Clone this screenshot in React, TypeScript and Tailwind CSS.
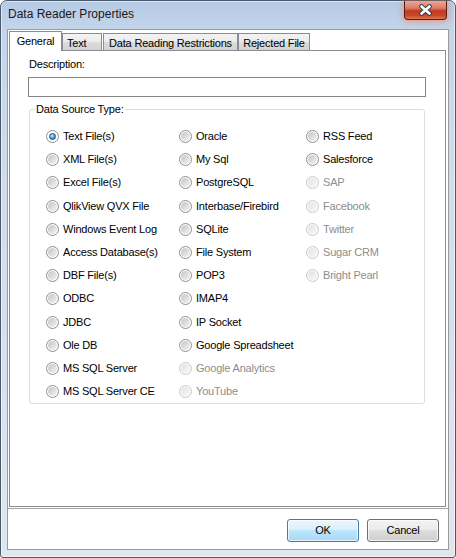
import React from "react";

type Choice = { label: string; on?: boolean; off?: boolean };

const columns: Choice[][] = [
  [
    { label: "Text File(s)", on: true },
    { label: "XML File(s)" },
    { label: "Excel File(s)" },
    { label: "QlikView QVX File" },
    { label: "Windows Event Log" },
    { label: "Access Database(s)" },
    { label: "DBF File(s)" },
    { label: "ODBC" },
    { label: "JDBC" },
    { label: "Ole DB" },
    { label: "MS SQL Server" },
    { label: "MS SQL Server CE" },
  ],
  [
    { label: "Oracle" },
    { label: "My Sql" },
    { label: "PostgreSQL" },
    { label: "Interbase/Firebird" },
    { label: "SQLite" },
    { label: "File System" },
    { label: "POP3" },
    { label: "IMAP4" },
    { label: "IP Socket" },
    { label: "Google Spreadsheet" },
    { label: "Google Analytics", off: true },
    { label: "YouTube", off: true },
  ],
  [
    { label: "RSS Feed" },
    { label: "Salesforce" },
    { label: "SAP", off: true },
    { label: "Facebook", off: true },
    { label: "Twitter", off: true },
    { label: "Sugar CRM", off: true },
    { label: "Bright Pearl", off: true },
  ],
];

const colWidths = ["w-[133px]", "w-[127px]", "w-[110px]"];

function Radio({ on, off }: { on?: boolean; off?: boolean }) {
  if (off) {
    return (
      <span className="flex h-[13px] w-[13px] shrink-0 items-center justify-center rounded-full border border-[#c9c9c9] bg-[#fbfbfb]">
        <span className="h-[9px] w-[9px] rounded-full bg-[linear-gradient(135deg,#e2e2e2,#f8f8f8)]" />
      </span>
    );
  }
  return (
    <span className="flex h-[13px] w-[13px] shrink-0 items-center justify-center rounded-full border border-[#8e8f8f] bg-[#fdfdfd]">
      {on ? (
        <span className="h-[7px] w-[7px] rounded-full border border-[#1d4f7c] bg-[radial-gradient(circle_at_40%_35%,#c4f0ff_0%,#4ea6e4_50%,#1d5f98_100%)]" />
      ) : (
        <span className="h-[9px] w-[9px] rounded-full bg-[linear-gradient(135deg,#c4c4c4,#f4f4f4)]" />
      )}
    </span>
  );
}

function CloseButton() {
  return (
    <div className="mr-[8px] flex h-[19px] w-[43px] shrink-0 items-center justify-center rounded-b-[4px] border border-t-0 border-[#5a1e12] bg-[linear-gradient(180deg,#eaa898_0%,#dd7b63_40%,#c23a1e_55%,#c8482a_80%,#e0774f_100%)] shadow-[0_1px_6px_1px_rgba(255,110,60,0.55)]">
      <svg width="15" height="12" viewBox="0 0 15 12">
        <path d="M3.5 2.5 L11.5 9.5 M11.5 2.5 L3.5 9.5" stroke="#3b3f48" strokeWidth="4.6" strokeLinecap="round" />
        <path d="M3.5 2.5 L11.5 9.5 M11.5 2.5 L3.5 9.5" stroke="#ffffff" strokeWidth="2.6" strokeLinecap="round" />
      </svg>
    </div>
  );
}

function Tab({ label, width, selected, left }: { label: string; width: string; selected?: boolean; left?: boolean }) {
  if (selected) {
    return (
      <div className={`relative z-10 mb-[-1px] flex h-[20px] ${width} justify-center border border-b-0 border-[#898c95] bg-white pt-[3px] leading-[13px]`}>
        {label}
      </div>
    );
  }
  return (
    <div
      className={`flex h-[17px] ${width} ${left ? "justify-start pl-[4px]" : "justify-center"} border border-b-0 border-[#898c95] bg-[linear-gradient(180deg,#f3f3f3_0%,#ebebeb_50%,#dddddd_50%,#d2d2d2_100%)] pt-[3px] leading-[13px]`}
    >
      {label}
    </div>
  );
}

export default function App() {
  return (
    <div className="h-[558px] w-[456px] bg-white text-[11px] tracking-[-0.2px] text-black [font-family:'Liberation_Sans',Arial,sans-serif]">
      <div className="flex h-full w-full flex-col rounded-t-[7px] rounded-b-[3px] border border-[#4a5a6d] bg-[linear-gradient(180deg,#b4c9e4_0%,#c4d5ea_5%,#d1ddec_35%,#dfe6ef_100%)] shadow-[inset_0_0_0_1px_rgba(255,255,255,0.55)]">
        {/* title bar */}
        <div className="flex h-[28px] shrink-0 items-start justify-between">
          <span className="pl-[7px] pt-[6px] text-[12px] leading-[14px] tracking-normal text-[#1a1a1a]">Data Reader Properties</span>
          <CloseButton />
        </div>

        {/* client area */}
        <div className="mx-[6px] flex h-[521px] shrink-0 flex-col border border-[#9b9b9b] bg-white">
          <div className="flex h-[20px] shrink-0 items-end pl-[1px]">
            <Tab label="General" width="w-[53px]" selected />
            <Tab label="Text" width="w-[40px]" left />
            <div className="w-[1px]" />
            <Tab label="Data Reading Restrictions" width="w-[135px]" />
            <Tab label="Rejected File" width="w-[72px]" />
          </div>

          <div className="ml-[1px] mr-[2px] h-[457px] shrink-0 border border-[#898c95] bg-white">
            <div className="pl-[18px] pt-[7px]">
              <div className="ml-[1px] leading-[13px]">Description:</div>
              <div className="mt-[6px] h-[20px] w-[398px] border border-[#858585] bg-white" />
              <fieldset className="ml-[1px] mt-[6px] w-[396px] rounded-[3px] border border-[#d5dfe5]">
                <legend className="ml-[5px] px-[1px] leading-[13px]">Data Source Type:</legend>
                <div className="flex pl-[16px] pt-[9px]">
                  {columns.map((col, ci) => (
                    <div key={ci} className={`flex flex-col ${colWidths[ci]}`}>
                      {col.map((c) => (
                        <div key={c.label} className="flex h-[23.2px] items-center gap-[4px]">
                          <Radio on={c.on} off={c.off} />
                          <span className={`whitespace-nowrap leading-[13px] ${c.off ? "text-[#8d8d8d]" : ""}`}>{c.label}</span>
                        </div>
                      ))}
                    </div>
                  ))}
                </div>
              </fieldset>
            </div>
          </div>

          <div className="mt-[1px] h-[1px] shrink-0 bg-[#a3a3a3]" />

          <div className="flex justify-end gap-[8px] pr-[9px] pt-[10px]">
            <button className="flex h-[23px] w-[72px] items-center justify-center rounded-[3px] border border-[#3c7fb1] bg-[linear-gradient(180deg,#eaf6fd_0%,#d9f0fc_50%,#bee6fd_50%,#a7d9f5_100%)] shadow-[inset_0_0_0_1px_rgba(255,255,255,0.7)]">
              OK
            </button>
            <button className="flex h-[23px] w-[72px] items-center justify-center rounded-[3px] border border-[#707070] bg-[linear-gradient(180deg,#f2f2f2_0%,#ebebeb_50%,#dddddd_50%,#cfcfcf_100%)] shadow-[inset_0_0_0_1px_rgba(255,255,255,0.7)]">
              Cancel
            </button>
          </div>
        </div>
      </div>
    </div>
  );
}
